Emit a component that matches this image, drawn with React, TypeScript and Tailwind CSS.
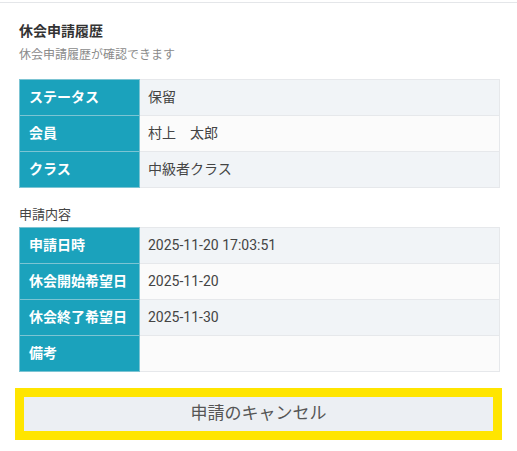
const font = { fontFamily: 'Roboto, "Noto Sans CJK JP", sans-serif' };

type Row = { label: string; value: string };

const memberRows: Row[] = [
  { label: "ステータス", value: "保留" },
  { label: "会員", value: "村上　太郎" },
  { label: "クラス", value: "中級者クラス" },
];

const requestRows: Row[] = [
  { label: "申請日時", value: "2025-11-20 17:03:51" },
  { label: "休会開始希望日", value: "2025-11-20" },
  { label: "休会終了希望日", value: "2025-11-30" },
  { label: "備考", value: "" },
];

function InfoTable({ rows }: { rows: Row[] }) {
  return (
    <table className="w-full border-collapse border border-[#e6e8eb]">
      <tbody>
        {rows.map((row, i) => (
          <tr key={row.label}>
            <th className="h-[36px] w-[120px] border border-[#7cc4d3] bg-[#1ba2bc] pl-[9px] text-left text-[14px] font-bold text-white">
              {row.label}
            </th>
            <td
              className={`h-[36px] border border-[#e6e8eb] pl-[8px] text-[14px] text-[#444] ${
                i % 2 === 0 ? "bg-[#f1f4f7]" : "bg-[#fbfbfb]"
              }`}
            >
              {row.value}
            </td>
          </tr>
        ))}
      </tbody>
    </table>
  );
}

export default function App() {
  return (
    <div className="min-h-[451px] w-[517px] bg-white" style={font}>
      <div className="h-[3px] border-b border-[#e4e6e9]" />
      <div className="pl-[19px] pr-[17px] pt-[18px]">
        <h2 className="text-[14px] font-bold leading-[20px] text-[#333]">休会申請履歴</h2>
        <p className="mt-[5px] text-[12px] leading-[18px] text-[#8a8a8a]">休会申請履歴が確認できます</p>

        <div className="mt-[15px]">
          <InfoTable rows={memberRows} />
        </div>

        <p className="mt-[18px] mb-[3px] text-[13px] leading-[18px] text-[#444]">申請内容</p>
        <InfoTable rows={requestRows} />
      </div>

      <div className="px-[15px] pt-[16px]">
        <div className="border-[9px] border-[#ffe500]">
          <button className="flex h-[34px] w-full items-center justify-center bg-[#eceff3] text-[17px] text-[#555]">
            申請のキャンセル
          </button>
        </div>
      </div>
    </div>
  );
}
